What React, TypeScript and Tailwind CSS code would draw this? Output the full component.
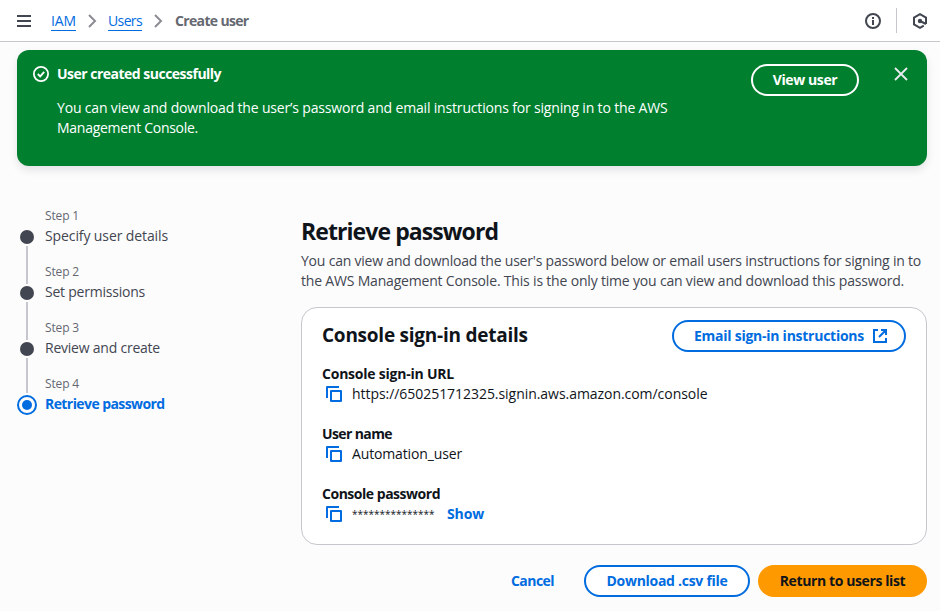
import type { ReactNode } from "react";

const HamburgerIcon = () => (
  <svg className="size-4" viewBox="0 0 16 16" stroke="#424650" strokeWidth="2" fill="none">
    <path d="M1 3h14M1 8h14M1 13h14" />
  </svg>
);

const Chevron = () => (
  <svg className="size-4" viewBox="0 0 16 16" stroke="#8c8c94" strokeWidth="2" fill="none">
    <path d="M5 2l6 6-6 6" />
  </svg>
);

const CopyIcon = () => (
  <svg className="size-4 shrink-0" viewBox="0 0 16 16" stroke="#006ce0" strokeWidth="2" fill="none" strokeLinejoin="round">
    <path d="M15 5H5v10h10V5Z" />
    <path d="M13 1H1v11" />
  </svg>
);

const steps = [
  { n: 1, label: "Specify user details", spacing: "tracking-[-0.106px]", line: "h-[38px]" },
  { n: 2, label: "Set permissions", spacing: "tracking-[-0.224px]", line: "h-[38px]" },
  { n: 3, label: "Review and create", spacing: "tracking-[-0.227px]", line: "h-[35px]" },
];

function TopBar() {
  return (
    <header className="flex h-[42px] items-center border-b border-[#c6c6cd] bg-white pl-4 pr-3">
      <HamburgerIcon />
      <nav className="ml-[19px] flex items-center">
        <a className="mt-px h-5 border-b border-[#006ce0] leading-5 tracking-[-0.118px] text-[#006ce0]">IAM</a>
        <span className="ml-2 mr-2"><Chevron /></span>
        <a className="mt-px h-5 border-b border-[#006ce0] leading-5 tracking-[-0.627px] text-[#006ce0]">Users</a>
        <span className="ml-2 mr-[9px]"><Chevron /></span>
        <span className="mt-px font-bold leading-5 tracking-[-0.66px] text-[#656871]">Create user</span>
      </nav>
      <div className="ml-auto flex items-center">
        <svg className="size-4" viewBox="0 0 16 16" stroke="#424650" strokeWidth="2" fill="none">
          <circle cx="8" cy="8" r="7" />
          <path d="M8 12V7M8 6V4" />
        </svg>
        <div className="ml-[15px] h-[25px] w-px bg-[#c6c6cd]" />
        <svg className="ml-[15px] size-4" viewBox="0 0 16 16" stroke="#424650" strokeWidth="2" fill="none">
          <path d="M14 11V4.600L8 1.200 2 4.600v6.800l6 3.400 3.800-2.200" />
          <circle cx="8" cy="8" r="1.200" fill="#424650" />
          <path d="m8 8 6 3" />
        </svg>
      </div>
    </header>
  );
}

function Banner() {
  return (
    <section className="ml-[17px] mr-[13px] mt-2 flex h-[116px] rounded-xl bg-[#00802f] pl-4 pr-[18px] text-white shadow-[0_4px_8px_rgba(0,7,22,0.1)]">
      <svg className="mt-4 size-4" viewBox="0 0 16 16" stroke="currentColor" strokeWidth="1.800" fill="none">
        <circle cx="8" cy="8" r="7.100" />
        <path d="m4.800 8 2.400 2.400 4-4.600" />
      </svg>
      <div className="ml-2 pt-3.5">
        <h2 className="font-bold leading-5 tracking-[-0.51px]">User created successfully</h2>
        <p className="mt-3.5 whitespace-nowrap font-medium leading-5">
          <span className="tracking-[-0.171px]">You can view and download the user’s password and email instructions for signing in to the AWS</span>
          <br />
          <span className="tracking-[-0.275px]">Management Console.</span>
        </p>
      </div>
      <button className="ml-auto mt-3.5 h-8 w-[108px] rounded-full border-2 border-white font-bold tracking-[-0.395px]">View user</button>
      <svg className="ml-[34px] mt-4 size-4" viewBox="0 0 16 16" stroke="#ebebf0" strokeWidth="1.800" fill="none">
        <path d="m2 2 12 12M14 2 2 14" />
      </svg>
    </section>
  );
}

function Steps() {
  return (
    <ol className="w-[284px] shrink-0 pl-[17px] pt-10">
      {steps.map((s) => (
        <li key={s.n} className="flex h-14">
          <div className="flex w-5 flex-col items-center pt-[24px]">
            <span className="size-3.5 shrink-0 rounded-full bg-[#424650]" />
            <span className={`mt-0.5 w-0.5 shrink-0 bg-[#c6c6cd] ${s.line}`} />
          </div>
          <div className="ml-2">
            <div className="text-xs leading-5 tracking-[-0.153px] text-[#656871]">Step {s.n}</div>
            <div className={`leading-5 text-[#424650] ${s.spacing}`}>{s.label}</div>
          </div>
        </li>
      ))}
      <li className="flex h-14">
        <div className="w-5 pt-[21px]">
          <span className="flex size-5 items-center justify-center rounded-full border-2 border-[#006ce0]">
            <span className="size-2.5 rounded-full bg-[#006ce0]" />
          </span>
        </div>
        <div className="ml-2">
          <div className="text-xs leading-5 tracking-[-0.153px] text-[#656871]">Step 4</div>
          <div className="font-bold leading-5 tracking-[-0.58px] text-[#006ce0]">Retrieve password</div>
        </div>
      </li>
    </ol>
  );
}

function Field({ label, labelSpacing, children }: { label: string; labelSpacing: string; children: ReactNode }) {
  return (
    <div className="leading-5">
      <div className={`font-bold ${labelSpacing}`}>{label}</div>
      <div className="flex h-5 items-center gap-2.5 pl-1">
        <CopyIcon />
        {children}
      </div>
    </div>
  );
}

export default function App() {
  return (
    <div className="h-[611px] w-[940px] overflow-hidden bg-[#fcfcfd] font-['Open_Sans','Noto_Sans',sans-serif] text-sm text-[#0f141a]">
      <TopBar />
      <Banner />
      <div className="flex">
        <Steps />
        <main className="ml-[17px] w-[626px] pt-[50px]">
          <h1 className="text-[23px] font-bold leading-[30px] tracking-[-0.92px]">Retrieve password</h1>
          <p className="mt-[5px] whitespace-nowrap leading-5 text-[#424650]">
            <span className="tracking-[-0.209px]">You can view and download the user's password below or email users instructions for signing in to</span>
            <br />
            <span className="tracking-[-0.186px]">the AWS Management Console. This is the only time you can view and download this password.</span>
          </p>
          <section className="mt-4 h-[238px] rounded-2xl border border-[#c6c6cd] bg-white px-5 pt-3">
            <div className="flex h-8 items-center justify-between">
              <h2 className="pb-0.5 text-[19px] font-bold leading-6 tracking-[-0.245px]">Console sign-in details</h2>
              <button className="flex h-8 w-[234px] items-center rounded-full border-2 border-[#006ce0] pl-5 font-bold tracking-[-0.255px] text-[#006ce0]">
                Email sign-in instructions
                <svg className="ml-2 size-4" viewBox="0 0 16 16" stroke="#006ce0" strokeWidth="2" fill="none">
                  <path d="M6 2H2v12h12v-4M9 2h5v5M7 9l7-7" />
                </svg>
              </button>
            </div>
            <div className="mt-3 flex flex-col gap-5">
              <Field label="Console sign-in URL" labelSpacing="tracking-[-0.226px]">
                <span className="tracking-[-0.047px]">https://650251712325.signin.aws.amazon.com/console</span>
              </Field>
              <Field label="User name" labelSpacing="tracking-[-0.609px]">
                <span className="tracking-[-0.140px]">Automation_user</span>
              </Field>
              <Field label="Console password" labelSpacing="tracking-[-0.481px]">
                <span className="w-[85px] text-[10px] leading-5">***************</span>
                <a className="font-bold tracking-[-0.141px] text-[#006ce0]">Show</a>
              </Field>
            </div>
          </section>
          <div className="mt-5 flex items-center justify-end gap-2 whitespace-nowrap">
            <button className="mr-[22px] font-bold tracking-[-0.553px] text-[#006ce0]">Cancel</button>
            <button className="h-8 w-[166px] rounded-full border-2 border-[#006ce0] bg-white font-bold tracking-[-0.283px] text-[#006ce0]">Download .csv file</button>
            <button className="h-8 w-[169px] rounded-full bg-[#ff9900] font-bold tracking-[-0.392px]">Return to users list</button>
          </div>
        </main>
      </div>
    </div>
  );
}
